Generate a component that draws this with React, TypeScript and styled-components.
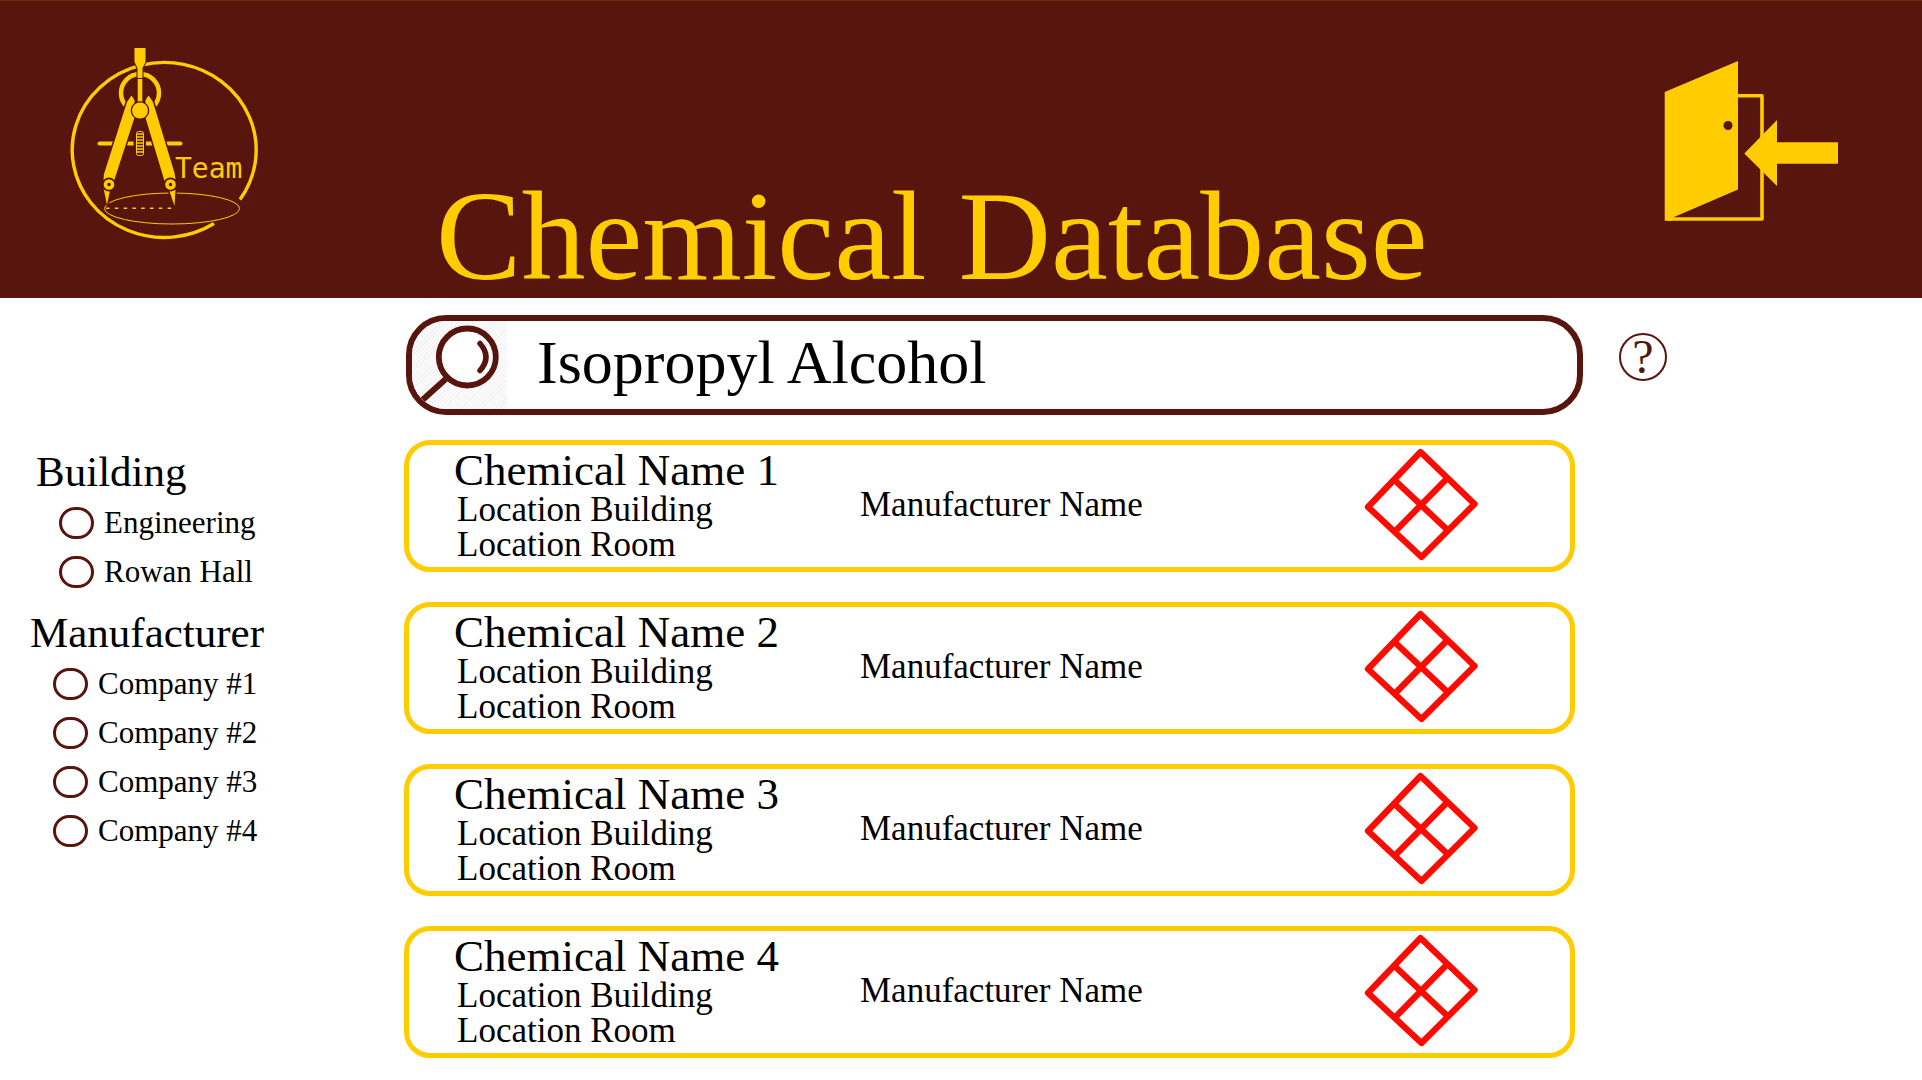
import React, { useState } from "react";
import styled, { createGlobalStyle } from "styled-components";

const MAROON = "#57150d";
const GOLD = "#ffcc00";
const SERIF = '"Liberation Serif", "Times New Roman", serif';

const GlobalStyle = createGlobalStyle`
  * { box-sizing: border-box; }
  body { margin: 0; background: #fff; color: #000; font-family: ${SERIF}; }
`;

const Header = styled.header`
  display: flex;
  align-items: flex-start;
  background: ${MAROON};
  color: ${GOLD};
  border-top: 1px solid #6b2a0c;
  padding: 39px 82px 0 70px;
`;

const Title = styled.h1`
  flex: 1;
  margin: 0;
  padding: 134px 0 0 136px;
  font-size: 128px;
  font-weight: 400;
  line-height: 124px;
  white-space: nowrap;
`;

const Logo = styled.svg`
  width: 230px;
  height: 210px;
  flex: none;
`;

const ExitButton = styled.button`
  flex: none;
  margin-top: 19px;
  padding: 0;
  border: 0;
  background: none;
  cursor: pointer;
  svg { display: block; width: 176px; height: 164px; }
`;

const Body = styled.div`
  display: flex;
  align-items: flex-start;
`;

const Sidebar = styled.aside`
  display: flex;
  flex-direction: column;
  gap: 11px;
  flex: none;
  width: 404px;
  padding-top: 148px;
`;

const Group = styled.fieldset<{ $indent: number }>`
  margin: 0;
  padding: 0 0 0 ${(p) => p.$indent}px;
  border: 0;
  min-width: 0;
`;

const Legend = styled.legend`
  padding: 0;
  font-size: 43px;
  line-height: 52px;
`;

const Option = styled.label`
  display: flex;
  align-items: center;
  gap: 10px;
  height: 49px;
  padding-left: 23px;
  font-size: 31px;
  cursor: pointer;
`;

const Radio = styled.input`
  appearance: none;
  width: 35px;
  height: 32px;
  margin: 0;
  border: 3px solid ${MAROON};
  border-radius: 16px;
  background: #fff;
  &:checked { background: ${MAROON}; box-shadow: inset 0 0 0 5px #fff; }
`;

const Content = styled.main`
  flex: 1;
  min-width: 0;
  padding: 17px 0 20px;
`;

const SearchRow = styled.form`
  display: flex;
  align-items: center;
  gap: 36px;
  padding-right: 255px;
`;

const SearchBox = styled.label`
  display: flex;
  align-items: stretch;
  flex: 1;
  height: 100px;
  margin-left: 2px;
  border: 6px solid ${MAROON};
  border-radius: 40px;
  overflow: hidden;
`;

const SearchIcon = styled.svg`
  flex: none;
  width: 95px;
  height: 88px;
  background: repeating-linear-gradient(135deg, #f1f1f1 0 1px, #fbfbfb 1px 3px);
`;

const SearchInput = styled.input`
  flex: 1;
  min-width: 0;
  padding: 0 30px 6px;
  border: 0;
  outline: 0;
  background: transparent;
  color: #000;
  font-family: ${SERIF};
  font-size: 62px;
`;

const HelpButton = styled.button`
  display: flex;
  align-items: center;
  justify-content: center;
  flex: none;
  width: 48px;
  height: 48px;
  margin-bottom: 16px;
  padding: 0;
  border: 2px solid ${MAROON};
  border-radius: 50%;
  background: none;
  color: ${MAROON};
  font-family: ${SERIF};
  font-size: 48px;
  line-height: 44px;
  cursor: pointer;
`;

const Results = styled.ul`
  display: flex;
  flex-direction: column;
  gap: 30px;
  margin: 25px 347px 0 0;
  padding: 0;
  list-style: none;
`;

const Card = styled.li`
  display: grid;
  grid-template-columns: 406px 1fr auto;
  align-items: center;
  min-height: 132px;
  padding: 0 92px 3px 45px;
  border: 5px solid ${GOLD};
  border-radius: 26px;
`;

const Name = styled.h2`
  margin: 0;
  font-size: 45px;
  font-weight: 400;
  line-height: 44px;
`;

const Detail = styled.p<{ $indent?: boolean }>`
  margin: 0;
  padding-left: ${(p) => (p.$indent ? 3 : 0)}px;
  font-size: 35px;
  line-height: 35px;
`;

const Diamond = styled.svg`
  display: block;
  width: 114px;
  height: 114px;
`;

function TeamLogo() {
  return (
    <Logo viewBox="70 40 230 210" role="img" aria-label="A Team">
      <g fill="none" stroke={GOLD}>
        <path strokeWidth="3.4" d="M241 199.500 A92 87.500 0 1 0 215 223.500" transform="translate(-1 0)" />
        <ellipse cx="172" cy="208.500" rx="67.500" ry="15.500" strokeWidth="1" />
        <path strokeWidth="1.500" strokeDasharray="3.500 5.300" d="M106 208.300H174" />
        <path strokeWidth="4" strokeLinecap="round" d="M99.500 143.500H180.500" />
      </g>
      <circle cx="140" cy="93" r="19" fill={MAROON} stroke={GOLD} strokeWidth="4.500" />
      <path d="M126 108L140 98L154 108L149 118H131Z" fill={MAROON} />
      <path d="M134.500 48h11v14l-3 6v13h-5v-13l-3-6z" fill={GOLD} stroke={MAROON} strokeWidth="2" paintOrder="stroke" />
      <path d="M137.700 79h4.600v27h-4.600z" fill={GOLD} stroke={MAROON} strokeWidth="2" paintOrder="stroke" />
      <g fill={GOLD} stroke={MAROON} strokeWidth="3" paintOrder="stroke">
        <path d="M131.500 95.500L134.500 100V111L135 116L114 181L103.500 180L104 174L127 102Z" />
        <path d="M148.500 95.500L145.500 100V111L145 116L164.500 181L175.500 179L174.500 173L153 102Z" />
        <path d="M103.500 188H110.500L107 205Z" />
        <path d="M169 190H175.500L174.500 206Z" />
      </g>
      <circle cx="140" cy="110.500" r="9.300" fill={MAROON} />
      <circle cx="140" cy="110.500" r="8" fill={GOLD} stroke={MAROON} strokeWidth="2" paintOrder="stroke" />
      <rect x="133.500" y="129" width="12.500" height="29" fill={MAROON} />
      <rect x="136.500" y="131.500" width="7" height="24" rx="2" fill="none" stroke={GOLD} />
      <path d="M137 134h6M137 137h6M137 140h6M137 143h6M137 146h6M137 149h6M137 152h6" stroke={GOLD} strokeWidth="1.400" />
      {[109, 170.5].map((x) => (
        <g key={x}>
          <circle cx={x} cy="184.500" r="7" fill={MAROON} />
          <circle cx={x} cy="184.500" r="3.500" fill={MAROON} stroke={GOLD} strokeWidth="3.600" />
        </g>
      ))}
      <text x="175" y="178" fill={GOLD} fontFamily='"DejaVu Sans Mono", monospace' fontSize="28">
        Team
      </text>
    </Logo>
  );
}

function DoorIcon() {
  return (
    <svg viewBox="1664 59 176 164" aria-hidden="true">
      <path d="M1737 95.700H1762V219H1667" fill="none" stroke={GOLD} strokeWidth="3.600" strokeLinejoin="round" />
      <path d="M1664.700 92L1738 61V189.500L1673 217.500L1672 220.700H1664.700Z" fill={GOLD} />
      <circle cx="1728" cy="125.500" r="4.500" fill={MAROON} />
      <path d="M1744.300 153.500L1777 120V142.300H1838V163.700H1777V186Z" fill={GOLD} />
    </svg>
  );
}

function HazardDiamond() {
  return (
    <Diamond viewBox="0 0 114 114" role="img" aria-label="Hazard diamond">
      <g fill="none" stroke="#ff0a00" strokeWidth="6.300" strokeLinejoin="round">
        <path d="M56.500 4L110.500 56L57.500 109L4 59Z" />
        <path d="M30 31.500L84 82.500M83.500 30L30.500 84" />
      </g>
    </Diamond>
  );
}

const filters = [
  { title: "Building", name: "building", indent: 36, options: ["Engineering", "Rowan Hall"] },
  {
    title: "Manufacturer",
    name: "manufacturer",
    indent: 30,
    options: ["Company #1", "Company #2", "Company #3", "Company #4"],
  },
];

const chemicals = [1, 2, 3, 4].map((n) => ({
  name: `Chemical Name ${n}`,
  building: "Location Building",
  room: "Location Room",
  manufacturer: "Manufacturer Name",
}));

export default function App() {
  const [query, setQuery] = useState("Isopropyl Alcohol");
  return (
    <>
      <GlobalStyle />
      <Header>
        <TeamLogo />
        <Title>Chemical Database</Title>
        <ExitButton aria-label="Log out">
          <DoorIcon />
        </ExitButton>
      </Header>
      <Body>
        <Sidebar>
          {filters.map((f) => (
            <Group key={f.name} $indent={f.indent}>
              <Legend>{f.title}</Legend>
              {f.options.map((o) => (
                <Option key={o}>
                  <Radio type="radio" name={f.name} value={o} />
                  {o}
                </Option>
              ))}
            </Group>
          ))}
        </Sidebar>
        <Content>
          <SearchRow onSubmit={(e) => e.preventDefault()}>
            <SearchBox>
              <SearchIcon viewBox="412 320 95 88" aria-hidden="true">
                <g fill="none" stroke={MAROON}>
                  <circle cx="467.300" cy="356" r="28.500" strokeWidth="5.800" fill="#fff" />
                  <path d="M448 376L418 403" strokeWidth="6" />
                  <path d="M480 342.500Q492 356 480 369.500" strokeWidth="5.500" strokeLinecap="round" />
                </g>
              </SearchIcon>
              <SearchInput
                type="text"
                aria-label="Search chemicals"
                value={query}
                onChange={(e) => setQuery(e.target.value)}
              />
            </SearchBox>
            <HelpButton type="button">?</HelpButton>
          </SearchRow>
          <Results>
            {chemicals.map((c) => (
              <Card key={c.name}>
                <div>
                  <Name>{c.name}</Name>
                  <Detail $indent>{c.building}</Detail>
                  <Detail $indent>{c.room}</Detail>
                </div>
                <Detail>{c.manufacturer}</Detail>
                <HazardDiamond />
              </Card>
            ))}
          </Results>
        </Content>
      </Body>
    </>
  );
}
